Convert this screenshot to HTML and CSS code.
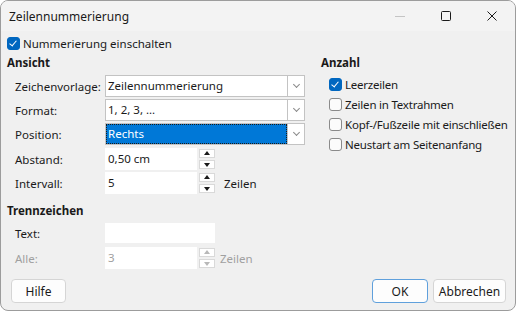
FILE: index.html
```html
<!DOCTYPE html>
<html lang="de">
<head>
  <meta charset="UTF-8">
  <title>Zeilennummerierung</title>
  <link rel="stylesheet" href="styles.css">
</head>
<body>
  <div class="window">
    <div class="titlebar">
      <span class="title">Zeilennummerierung</span>
      <div class="caption-buttons">
        <span class="cap cap-min"><svg width="10" height="10" viewBox="0 0 10 10"><path d="M0 5.5h10" stroke="#c4c4c4" stroke-width="1"/></svg></span>
        <span class="cap"><svg width="10" height="10" viewBox="0 0 10 10"><rect x="0.5" y="0.5" width="9" height="9" rx="1" fill="none" stroke="#1a1a1a" stroke-width="1"/></svg></span>
        <span class="cap"><svg width="10" height="10" viewBox="0 0 10 10"><path d="M0.5 0.5l9 9M9.5 0.5l-9 9" stroke="#1a1a1a" stroke-width="1"/></svg></span>
      </div>
    </div>

    <div class="content">
      <label class="check top-check"><span class="box checked"></span>Nummerierung einschalten</label>

      <div class="columns">
        <div class="col-left">
          <div class="heading">Ansicht</div>

          <div class="row">
            <span class="label">Zeichenvorlage:</span>
            <div class="combo"><span class="combo-text">Zeilennummerierung</span><span class="drop"></span></div>
          </div>
          <div class="row">
            <span class="label">Format:</span>
            <div class="combo"><span class="combo-text">1, 2, 3, ...</span><span class="drop"></span></div>
          </div>
          <div class="row">
            <span class="label">Position:</span>
            <div class="combo selected"><span class="combo-text">Rechts</span><span class="drop"></span></div>
          </div>
          <div class="row spin-row">
            <span class="label">Abstand:</span>
            <div class="field">0,50 cm</div>
            <div class="spin"><span class="up"></span><span class="down"></span></div>
          </div>
          <div class="row spin-row">
            <span class="label">Intervall:</span>
            <div class="field">5</div>
            <div class="spin"><span class="up"></span><span class="down"></span></div>
            <span class="unit">Zeilen</span>
          </div>

          <div class="heading sep-heading">Trennzeichen</div>
          <div class="row text-row">
            <span class="label">Text:</span>
            <div class="field wide"></div>
          </div>
          <div class="row spin-row disabled">
            <span class="label">Alle:</span>
            <div class="field">3</div>
            <div class="spin"><span class="up"></span><span class="down"></span></div>
            <span class="unit">Zeilen</span>
          </div>
        </div>

        <div class="col-right">
          <div class="heading">Anzahl</div>
          <label class="check"><span class="box checked"></span>Leerzeilen</label>
          <label class="check"><span class="box"></span>Zeilen in Textrahmen</label>
          <label class="check"><span class="box"></span>Kopf-/Fußzeile mit einschließen</label>
          <label class="check"><span class="box"></span>Neustart am Seitenanfang</label>
        </div>
      </div>

      <div class="footer">
        <button class="btn btn-help">Hilfe</button>
        <div class="spacer"></div>
        <button class="btn btn-ok">OK</button>
        <button class="btn btn-cancel">Abbrechen</button>
      </div>
    </div>
  </div>
</body>
</html>
```

FILE: styles.css
```css
html, body {
  margin: 0;
  background: #ffffff;
}

body {
  font-family: "Noto Sans", "Open Sans", sans-serif;
  font-size: 11.5px;
  color: #1a1a1a;
}

.window {
  width: 514px;
  height: 309px;
  border: 1px solid #9c9c9c;
  border-radius: 8px;
  overflow: hidden;
  background: #f0f0f0;
  display: flex;
  flex-direction: column;
}

.titlebar {
  height: 30px;
  background: #f3f3f3;
  display: flex;
  align-items: center;
  padding-left: 8px;
}

.title {
  font-size: 12px;
}

.caption-buttons {
  margin-left: auto;
  display: flex;
  height: 100%;
}

.cap {
  width: 46px;
  display: flex;
  align-items: center;
  justify-content: center;
}

.content {
  flex: 1;
  display: flex;
  flex-direction: column;
  padding: 5px 9px 7px 6px;
}

/* checkboxes */
.check {
  display: flex;
  align-items: center;
  height: 20px;
  white-space: nowrap;
}

.box {
  width: 11px;
  height: 11px;
  border: 1px solid #8a8a8a;
  border-radius: 3px;
  background: #fbfbfb;
  margin-right: 3px;
  position: relative;
  flex: 0 0 auto;
}

.box.checked {
  background: #0067c0;
  border-color: #0067c0;
}

.box.checked::after {
  content: "";
  position: absolute;
  left: 3px;
  top: 1px;
  width: 3px;
  height: 6px;
  border: solid #ffffff;
  border-width: 0 1px 1px 0;
  transform: rotate(40deg);
}

.top-check {
  height: 15px;
}

.columns {
  display: flex;
}

.col-left {
  flex: 0 0 314px;
  display: flex;
  flex-direction: column;
}

.col-right {
  flex: 1;
  display: flex;
  flex-direction: column;
}

.col-right .check {
  margin-left: 8px;
  letter-spacing: -0.22px;
}

.col-right .heading {
  margin-bottom: 3px;
}

.heading {
  font-weight: bold;
  height: 17px;
  line-height: 17px;
  margin-top: 3px;
}

.col-left .heading {
  margin-bottom: 4px;
}

.row {
  display: flex;
  align-items: center;
  height: 22px;
  margin-bottom: 2px;
}

.label {
  flex: 0 0 98px;
  padding-left: 8px;
  box-sizing: border-box;
}

.combo {
  width: 198px;
  height: 20px;
  border: 1px solid #c3c3c3;
  background: #ffffff;
  display: flex;
  align-items: stretch;
}

.combo-text {
  flex: 1;
  line-height: 20px;
  padding-left: 2px;
}

.combo.selected .combo-text {
  background: #0078d7;
  color: #ffffff;
  outline: 1px dotted #1a1a1a;
  outline-offset: -1px;
}

.drop {
  width: 16px;
  border-left: 1px solid #c3c3c3;
  background: #ffffff;
  position: relative;
}

.drop::after {
  content: "";
  position: absolute;
  left: 6px;
  top: 6px;
  width: 4px;
  height: 4px;
  border: solid #8a8a8a;
  border-width: 0 1px 1px 0;
  transform: rotate(45deg);
}

.spin-row {
  margin-top: 1px;
  margin-bottom: 1px;
}

.field {
  width: 89px;
  height: 22px;
  line-height: 22px;
  background: #ffffff;
  padding-left: 3px;
}

.field.wide {
  width: 107px;
  height: 20px;
}

.spin {
  width: 16px;
  height: 20px;
  margin-left: 2px;
  display: flex;
  flex-direction: column;
  gap: 2px;
}

.spin span {
  flex: 1;
  background: #ffffff;
  border: 1px solid #d9d9d9;
  position: relative;
}

.spin .up::after,
.spin .down::after {
  content: "";
  position: absolute;
  left: 4px;
  width: 0;
  height: 0;
  border-left: 3.5px solid transparent;
  border-right: 3.5px solid transparent;
}

.spin .up::after {
  top: 1px;
  border-bottom: 4px solid #1a1a1a;
}

.spin .down::after {
  top: 2px;
  border-top: 4px solid #1a1a1a;
}

.unit {
  margin-left: 9px;
}

.sep-heading {
  margin-top: 7px;
  margin-bottom: 3px;
}

.text-row {
  height: 20px;
  margin-bottom: 3px;
}

.disabled {
  color: #a0a0a0;
}

.disabled .field {
  color: #a0a0a0;
}

.disabled .spin .up::after {
  border-bottom-color: #b8b8b8;
}

.disabled .spin .down::after {
  border-top-color: #b8b8b8;
}

.disabled .unit {
  margin-left: 5px;
}

.footer {
  margin-top: auto;
  display: flex;
  align-items: center;
}

.spacer {
  flex: 1;
}

.btn {
  font-family: inherit;
  font-size: 12px;
  color: #1a1a1a;
  height: 24px;
  background: #fdfdfd;
  border: 1px solid #d5d5d5;
  border-radius: 4px;
  padding: 0;
}

.btn-help {
  width: 55px;
  margin-left: 4px;
}

.btn-ok {
  width: 56px;
  border-color: #5fa0dc;
}

.btn-cancel {
  width: 73px;
  margin-left: 5px;
}
```
